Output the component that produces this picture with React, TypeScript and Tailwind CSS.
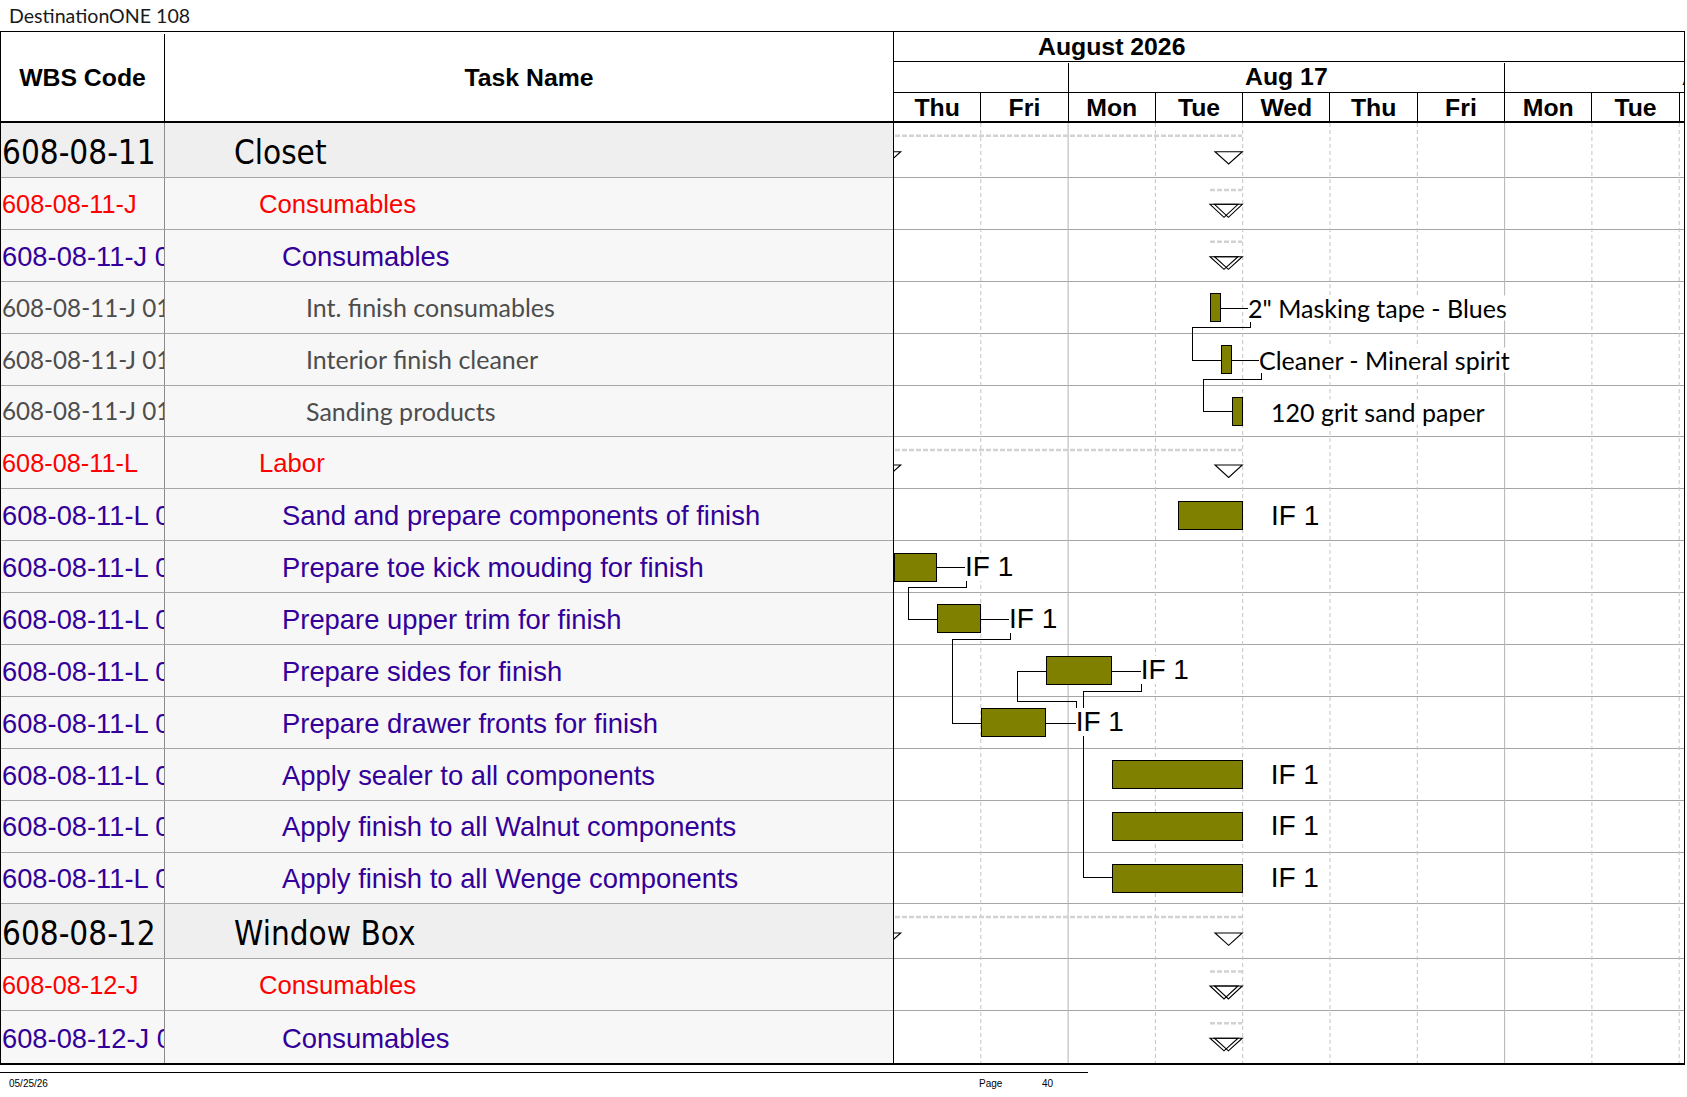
import React from 'react';

type Kind = 'group' | 'red' | 'purple' | 'gray';

const ROWS: { wbs: string; name: string; kind: Kind }[] = [
  { wbs: '608-08-11', name: 'Closet', kind: 'group' },
  { wbs: '608-08-11-J', name: 'Consumables', kind: 'red' },
  { wbs: '608-08-11-J 01', name: 'Consumables', kind: 'purple' },
  { wbs: '608-08-11-J 01-01', name: 'Int. finish consumables', kind: 'gray' },
  { wbs: '608-08-11-J 01-02', name: 'Interior finish cleaner', kind: 'gray' },
  { wbs: '608-08-11-J 01-03', name: 'Sanding products', kind: 'gray' },
  { wbs: '608-08-11-L', name: 'Labor', kind: 'red' },
  { wbs: '608-08-11-L 01', name: 'Sand and prepare components of finish', kind: 'purple' },
  { wbs: '608-08-11-L 02', name: 'Prepare toe kick mouding for finish', kind: 'purple' },
  { wbs: '608-08-11-L 03', name: 'Prepare upper trim for finish', kind: 'purple' },
  { wbs: '608-08-11-L 04', name: 'Prepare sides for finish', kind: 'purple' },
  { wbs: '608-08-11-L 05', name: 'Prepare drawer fronts for finish', kind: 'purple' },
  { wbs: '608-08-11-L 06', name: 'Apply sealer to all components', kind: 'purple' },
  { wbs: '608-08-11-L 07', name: 'Apply finish to all Walnut components', kind: 'purple' },
  { wbs: '608-08-11-L 08', name: 'Apply finish to all Wenge components', kind: 'purple' },
  { wbs: '608-08-12', name: 'Window Box', kind: 'group' },
  { wbs: '608-08-12-J', name: 'Consumables', kind: 'red' },
  { wbs: '608-08-12-J 01', name: 'Consumables', kind: 'purple' },
];

const ROW_H: Record<Kind, string> = {
  group: 'h-[55px]',
  red: 'h-[51.9px]',
  purple: 'h-[51.9px]',
  gray: 'h-[51.9px]',
};

const WBS_CLS: Record<Kind, string> = {
  group: "pt-[4px] text-[33px] text-black font-['DejaVu_Sans_Condensed','DejaVu_Sans',sans-serif] font-stretch-condensed",
  red: "pt-[2px] text-[25.3px] text-[#ff0000] font-['Liberation_Sans',Arial,sans-serif]",
  purple: "pt-[2px] text-[27.3px] text-[#330099] font-['Liberation_Sans',Arial,sans-serif]",
  gray: "pt-[1px] text-[24.2px] text-[#4d4d4d] font-['Lato','Open_Sans',sans-serif]",
};

const NAME_CLS: Record<Kind, string> = {
  group: "pl-[69px] pt-[4px] text-[33px] text-black font-['DejaVu_Sans_Condensed','DejaVu_Sans',sans-serif] font-stretch-condensed",
  red: "pl-[94px] pt-[2px] text-[25.7px] text-[#ff0000] font-['Liberation_Sans',Arial,sans-serif]",
  purple: "pl-[117px] pt-[2px] text-[27.4px] text-[#330099] font-['Liberation_Sans',Arial,sans-serif]",
  gray: "pl-[141px] pt-[1px] text-[25px] text-[#4d4d4d] font-['Lato','Open_Sans',sans-serif]",
};

const DAYS = ['Thu', 'Fri', 'Mon', 'Tue', 'Wed', 'Thu', 'Fri', 'Mon', 'Tue'];

// gantt body origin in page pixels
const X0 = 894;
const Y0 = 123;
const COL = 87.3;

const BARS: [number, number, number, number][] = [
  [1210.3, 1220.7, 293.3, 321.7],
  [1221.7, 1231.3, 345.7, 373.3],
  [1232.3, 1242.3, 397.3, 425],
  [1178.3, 1242.7, 501.7, 529.3],
  [894.3, 936.7, 553.3, 581],
  [937.3, 980.7, 604.3, 632.3],
  [1046, 1111.7, 656, 684.3],
  [981.3, 1045.7, 708.3, 736.3],
  [1112.3, 1242.7, 760.7, 788.3],
  [1112.3, 1242.7, 812.6, 840.2],
  [1112.3, 1242.7, 864.5, 892.1],
];

const LINKS: string[] = [
  '1220.7,308.3 1250,308.3',
  '1231.3,360 1260,360',
  '936.7,567.3 966.7,567.3',
  '980.7,619 1010,619',
  '1111.7,671 1141.7,671',
  '1045.7,723.3 1076.7,723.3',
  '1250,321.7 1250,327.3 1192.3,327.3 1192.3,360 1221.7,360',
  '1261,373.3 1261,379 1203.3,379 1203.3,411.7 1232.3,411.7',
  '966.7,581 966.7,587.3 908.3,587.3 908.3,619 937.3,619',
  '1010,632.3 1010,639.3 952.3,639.3 952.3,723.3 981.3,723.3',
  '1141.7,684.3 1141.7,691 1083.3,691 1083.3,877.7 1112.3,877.7',
  '1076.7,710 1076.7,701.7 1017.3,701.7 1017.3,671 1046,671',
];

// summary rows: dashed bar and the start/end triangles
const SUMMARIES: { x1: number; dash: number; top: number; apex: number; double: boolean }[] = [
  { x1: 895, dash: 135.7, top: 151.7, apex: 164, double: false },
  { x1: 1210, dash: 190, top: 204.3, apex: 217.3, double: true },
  { x1: 1210, dash: 241.7, top: 256.7, apex: 269.3, double: true },
  { x1: 895, dash: 450, top: 465, apex: 477.5, double: false },
  { x1: 895, dash: 917, top: 933, apex: 945.3, double: false },
  { x1: 1210, dash: 971.6, top: 986, apex: 999, double: true },
  { x1: 1210, dash: 1023.2, top: 1038.2, apex: 1050.8, double: true },
];

const LABELS: { x: number; y: number; text: string; cal?: boolean }[] = [
  { x: 1250, y: 308.3, text: '2" Masking tape - Blues', cal: true },
  { x: 1261, y: 360, text: 'Cleaner - Mineral spirit', cal: true },
  { x: 1273, y: 411.5, text: '120 grit sand paper', cal: true },
  { x: 1273, y: 515.5, text: 'IF 1' },
  { x: 967, y: 567.2, text: 'IF 1' },
  { x: 1011, y: 618.6, text: 'IF 1' },
  { x: 1142.7, y: 670.4, text: 'IF 1' },
  { x: 1077.7, y: 722.3, text: 'IF 1' },
  { x: 1272.7, y: 774.5, text: 'IF 1' },
  { x: 1272.7, y: 826.4, text: 'IF 1' },
  { x: 1272.7, y: 878.3, text: 'IF 1' },
];

const tri = (x1: number, x2: number, top: number, apex: number) =>
  `${x1},${top} ${x2},${top} ${(x1 + x2) / 2},${apex}`;

function GanttDrawing() {
  const lines = Array.from({ length: 9 }, (_, i) => X0 + COL * (i + 1) - 0.5);
  return (
    <svg
      className="absolute inset-0"
      width={790}
      height={941}
      viewBox={`${X0} ${Y0} 790 941`}
    >
      {lines.map((x, i) =>
        i === 1 || i === 6 ? (
          <line key={i} x1={x} x2={x} y1={Y0} y2={Y0 + 941} stroke="#b4b4b4" strokeWidth={1} />
        ) : (
          <line key={i} x1={x} x2={x} y1={Y0} y2={Y0 + 941} stroke="#c4c4c4" strokeWidth={1} strokeDasharray="4 3" />
        ),
      )}

      {SUMMARIES.map((s, i) => (
        <g key={i}>
          <line x1={s.x1} x2={1242} y1={s.dash} y2={s.dash} stroke="#d2d2d2" strokeWidth={2.5} strokeDasharray="5 2" />
          {s.double ? (
            <>
              <polygon points={tri(1210, 1238, s.top, s.apex)} fill="none" stroke="#000" strokeWidth={1.1} />
              <polygon points={tri(1214.5, 1242.3, s.top, s.apex)} fill="none" stroke="#000" strokeWidth={1.1} />
            </>
          ) : (
            <>
              <polygon points={tri(873, 900.7, s.top, s.apex)} fill="#fff" stroke="#000" strokeWidth={1.1} />
              <polygon points={tri(1215, 1242.3, s.top, s.apex)} fill="#fff" stroke="#000" strokeWidth={1.1} />
            </>
          )}
        </g>
      ))}

      {LINKS.map((p, i) => (
        <polyline key={i} points={p} fill="none" stroke="#000" strokeWidth={1} shapeRendering="crispEdges" />
      ))}

      {BARS.map(([x1, x2, y1, y2], i) => (
        <rect
          key={i}
          x={x1}
          y={y1}
          width={x2 - x1}
          height={y2 - y1}
          fill="#808000"
          stroke="#000"
          strokeWidth={1}
          shapeRendering="crispEdges"
        />
      ))}
    </svg>
  );
}

export default function App() {
  return (
    <div className="w-[1687px] h-[1097px] bg-white overflow-hidden relative">
      <div className="h-[31px] pl-[9px] flex items-center text-[19.6px] text-[#1a1a1a] font-['Lato','Open_Sans',sans-serif]">
        DestinationONE 108
      </div>

      <div className="flex w-[1685px] border-t border-l border-r border-b-2 border-black">
        {/* left table */}
        <div className="w-[892px] flex flex-col">
          <div className="h-[91px] flex border-b-2 border-black font-['Liberation_Sans',Arial,sans-serif] font-bold text-[24.8px] text-black pt-[2px]">
            <div className="w-[164px] border-r border-black flex items-center justify-center">WBS Code</div>
            <div className="flex-1 flex items-center justify-center">Task Name</div>
          </div>
          {ROWS.map((r, i) => (
            <div
              key={i}
              className={[
                'flex border-[#a6a6a6]',
                ROW_H[r.kind],
                r.kind === 'group' ? 'bg-[#efefef]' : 'bg-[#f7f7f7]',
                i === ROWS.length - 1 ? '' : 'border-b',
              ].join(' ')}
            >
              <div
                className={[
                  'w-[164px] shrink-0 border-r border-[#8c8c8c] overflow-hidden whitespace-nowrap flex items-center pl-[1px] leading-none',
                  WBS_CLS[r.kind],
                ].join(' ')}
              >
                {r.wbs}
              </div>
              <div className={['flex-1 flex items-center whitespace-nowrap leading-none', NAME_CLS[r.kind]].join(' ')}>
                {r.name}
              </div>
            </div>
          ))}
        </div>

        {/* gantt */}
        <div className="w-[791px] border-l border-black flex flex-col overflow-hidden">
          <div className="h-[91px] border-b-2 border-black flex flex-col font-['Liberation_Sans',Arial,sans-serif] font-bold text-[24.8px] text-black leading-none">
            <div className="h-[30px] border-b border-black flex items-center pl-[144px] pt-[1px]">August 2026</div>
            <div className="h-[31px] border-b border-black flex overflow-hidden pt-[1px]">
              <div className="w-[174.6px] shrink-0 border-r border-black" />
              <div className="w-[436.5px] shrink-0 border-r border-black flex items-center justify-center">Aug 17</div>
              <div className="w-[436.5px] shrink-0 flex items-center justify-center">Aug 24</div>
            </div>
            <div className="flex-1 flex overflow-hidden">
              {DAYS.map((d, i) => (
                <div key={i} className="w-[87.3px] shrink-0 border-r border-black flex items-center justify-center pt-[2px]">
                  {d}
                </div>
              ))}
              <div className="w-[87.3px] shrink-0 flex items-center justify-center pt-[2px]">Wed</div>
            </div>
          </div>

          <div className="relative">
            {ROWS.map((r, i) => (
              <div
                key={i}
                className={[
                  'bg-white border-[#a6a6a6]',
                  ROW_H[r.kind],
                  i === ROWS.length - 1 ? '' : 'border-b',
                ].join(' ')}
              />
            ))}
            <GanttDrawing />
            {LABELS.map((l, i) => (
              <span
                key={i}
                className={[
                  'absolute -translate-y-1/2 bg-white whitespace-nowrap leading-none text-black',
                  l.cal
                    ? "text-[25px] font-['Lato','Open_Sans',sans-serif]"
                    : "text-[28px] font-['Liberation_Sans',Arial,sans-serif]",
                ].join(' ')}
                style={{ left: l.x - X0 - 2, top: l.y - Y0 }}
              >
                {l.text}
              </span>
            ))}
          </div>
        </div>
      </div>

      <div className="mt-[7px] w-[1088px] border-t border-black flex pt-[6px] text-[10px] leading-none text-black font-['Liberation_Sans_Narrow','Liberation_Sans',Arial,sans-serif]">
        <span className="w-[979px] pl-[9px]">05/25/26</span>
        <span className="w-[63px]">Page</span>
        <span>40</span>
      </div>
    </div>
  );
}
